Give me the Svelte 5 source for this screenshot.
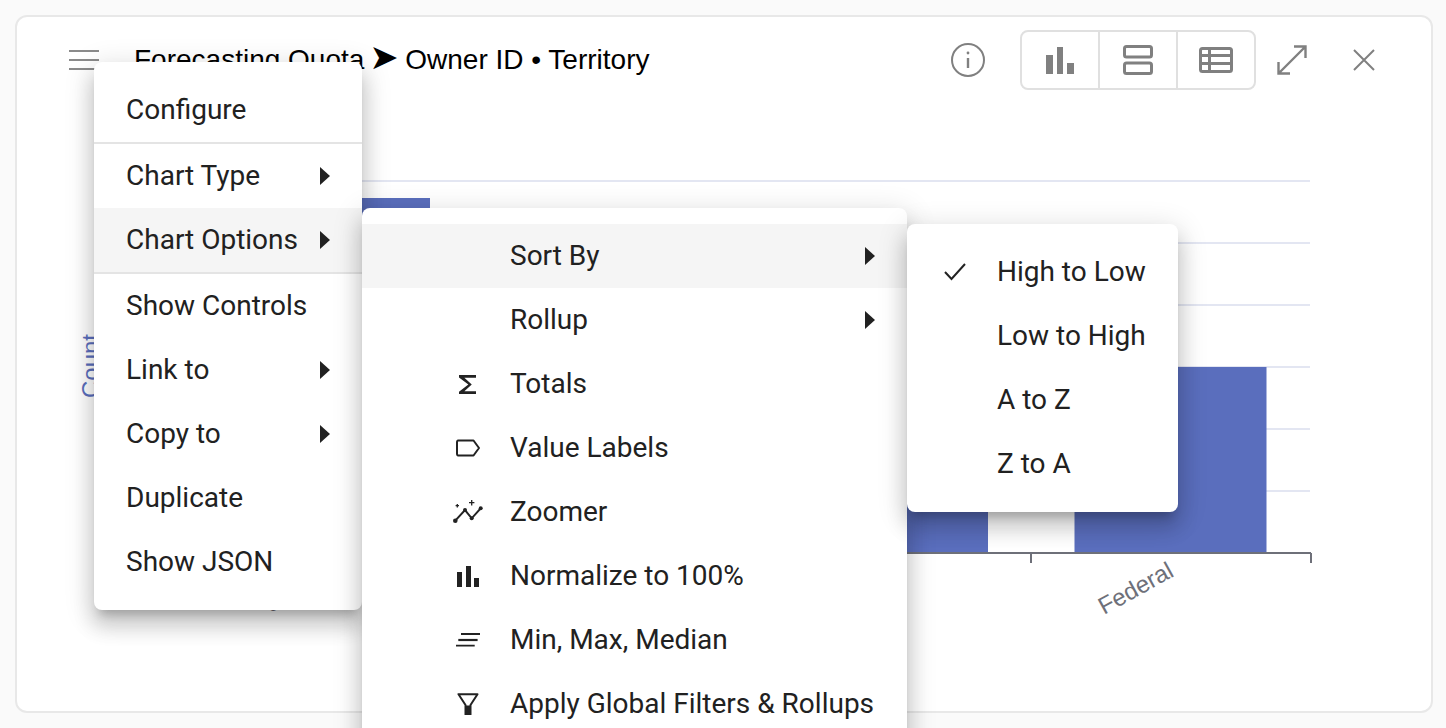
<script lang="ts">
	const mainItems = [
		{ label: 'Chart Type', arrow: true },
		{ label: 'Chart Options', arrow: true, open: true }
	];
	const lowerItems = [
		{ label: 'Show Controls' },
		{ label: 'Link to', arrow: true },
		{ label: 'Copy to', arrow: true },
		{ label: 'Duplicate' },
		{ label: 'Show JSON' }
	];
	const sortItems = ['High to Low', 'Low to High', 'A to Z', 'Z to A'];
	const gridY = [181, 243, 305, 367, 429, 491];
</script>

<div class="page">
	<div class="card">
		<header class="head">
			<button class="icon-btn" aria-label="Menu">
				<svg width="30" height="20" viewBox="0 0 30 20" fill="#8a8a8a"><rect y="0" width="30" height="2"/><rect y="9" width="30" height="2"/><rect y="18" width="30" height="2"/></svg>
			</button>
			<h1 class="title">Forecasting Quota <span class="sep">➤</span> Owner ID • Territory</h1>
			<svg class="info" width="34" height="34" viewBox="0 0 34 34" fill="none" stroke="#808080" stroke-width="2"><circle cx="17" cy="17" r="16"/><path d="M17 15v10" stroke-width="2.4"/><circle cx="17" cy="10" r="1.4" fill="#808080" stroke="none"/></svg>
			<div class="views">
				<button class="view" aria-label="Chart">
					<svg width="28" height="27" viewBox="0 0 28 27" fill="#808080"><rect x="0" y="8" width="7" height="19"/><rect x="11" y="0" width="6" height="27"/><rect x="21" y="16" width="7" height="11"/></svg>
				</button>
				<button class="view" aria-label="Rows">
					<svg width="30" height="30" viewBox="0 0 30 30" fill="none" stroke="#808080" stroke-width="3"><rect x="1.5" y="1.5" width="27" height="10.500" rx="2"/><rect x="1.5" y="18" width="27" height="10.500" rx="2"/></svg>
				</button>
				<button class="view" aria-label="Table">
					<svg width="34" height="26" viewBox="0 0 34 26" fill="none" stroke="#808080" stroke-width="3"><rect x="1.5" y="1.5" width="31" height="23" rx="2"/><path d="M1.500 8.500h31M1.500 16.500h31M10.500 1.500v23"/></svg>
				</button>
			</div>
			<svg class="expand" width="30" height="30" viewBox="0 0 30 30" fill="none" stroke="#808080" stroke-width="2.400"><path d="M2 28 28 2M17 1.500h11.500V13M13 28.500H1.500V17"/></svg>
			<svg width="22" height="22" viewBox="0 0 22 22" fill="none" stroke="#808080" stroke-width="2"><path d="M1 1 21 21M21 1 1 21"/></svg>
		</header>

		<svg class="chart" width="1414" height="608" viewBox="17 103 1414 608">
			{#each gridY as y}
				<line x1="200" x2="1310" y1={y} y2={y} stroke="#e3e6f2" stroke-width="2"/>
			{/each}
			<rect x="238" y="198" width="192" height="354" fill="#5a6ebd"/>
			<rect x="796" y="260" width="192" height="292" fill="#5a6ebd"/>
			<rect x="1074.500" y="367" width="192" height="185" fill="#5a6ebd"/>
			<path d="M190 553H1311M1031 553v10M1311 553v10" stroke="#6e7079" stroke-width="2" fill="none"/>
			<text class="ax-y" transform="translate(99 398) rotate(-90)">Count</text>
			<text class="ax-x" transform="translate(1104 615) rotate(-29)">Federal</text>
			<text class="ax-x" transform="translate(268 609) rotate(-30)">g</text>
		</svg>

		<nav class="menu main">
			<div class="item"><span>Configure</span></div>
			<hr />
			{#each mainItems as it}
				<div class="item" class:on={it.open}>
					<span>{it.label}</span>
					{#if it.arrow}<i class="arrow"></i>{/if}
					{#if it.open}
						<div class="menu options">
							<div class="item on with-icon">
								<b class="ico"></b><span>Sort By</span><i class="arrow"></i>
								<div class="menu sort">
									{#each sortItems as s, i}
										<div class="item with-icon">
											<b class="ico">
												{#if i === 0}
													<svg class="nudge" width="24" height="20" viewBox="0 0 24 20" fill="none" stroke="#222" stroke-width="2"><path d="M2 10 8.500 17 22 2"/></svg>
												{/if}
											</b>
											<span>{s}</span>
										</div>
									{/each}
								</div>
							</div>
							<div class="item with-icon"><b class="ico"></b><span>Rollup</span><i class="arrow"></i></div>
							<div class="item with-icon">
								<b class="ico"><svg width="17" height="19" viewBox="6 4 12 16" preserveAspectRatio="none" fill="#222"><path d="M18 4H6v2l6.600 6L6 18v2h12v-2.400H9.800l5.200-5.600-5.200-5.600H18z"/></svg></b>
								<span>Totals</span>
							</div>
							<div class="item with-icon">
								<b class="ico"><svg class="nudge" width="26" height="20" viewBox="0 0 26 20" fill="none" stroke="#222" stroke-width="2"><path d="M3 2.500h15.500L24 10l-5.500 7.500H3a1.500 1.500 0 0 1-1-1.500V4a1.500 1.500 0 0 1 1-1.500z" stroke-linejoin="round"/></svg></b>
								<span>Value Labels</span>
							</div>
							<div class="item with-icon">
								<b class="ico"><svg class="nudge wide" width="30" height="24" viewBox="0 0 30 24" fill="#222"><path d="M2.300 20.700 12 10l6.700 8.300 9-10" fill="none" stroke="#222" stroke-width="2"/><circle cx="2.300" cy="20.700" r="2.300"/><circle cx="12" cy="10" r="2"/><circle cx="18.700" cy="18.300" r="2"/><circle cx="27.700" cy="8.300" r="2"/><path d="M18.700 0v5.400M16 2.700h5.400M4.300 4v3.400M2.600 5.700H6" fill="none" stroke="#222" stroke-width="1.300"/></svg></b>
								<span>Zoomer</span>
							</div>
							<div class="item with-icon">
								<b class="ico"><svg class="nudge" width="22" height="21" viewBox="0 0 22 21" fill="#222"><rect x="0" y="6" width="5" height="15"/><rect x="9" y="0" width="5" height="21"/><rect x="17" y="12" width="5" height="9"/></svg></b>
								<span>Normalize to 100%</span>
							</div>
							<div class="item with-icon">
								<b class="ico"><svg class="nudge" width="24" height="14" viewBox="0 0 24 14" fill="none" stroke="#222" stroke-width="1.800"><path d="M5 1h19M0 12.700h18.700"/><path d="M2.300 7h19.300" stroke-width="2.200"/></svg></b>
								<span>Min, Max, Median</span>
							</div>
							<div class="item with-icon">
								<b class="ico"><svg class="nudge" width="22" height="22" viewBox="0 0 22 22"><path d="M1.500 1.200h19L13.500 12v9.500h-5V12z" fill="#fff" stroke="#222" stroke-width="2" stroke-linejoin="round"/><path d="M8.500 12.500h5v9h-5z" fill="#222"/></svg></b>
								<span>Apply Global Filters &amp; Rollups</span>
							</div>
						</div>
					{/if}
				</div>
			{/each}
			<hr />
			{#each lowerItems as it}
				<div class="item">
					<span>{it.label}</span>
					{#if it.arrow}<i class="arrow"></i>{/if}
				</div>
			{/each}
		</nav>
	</div>
</div>

<style>
	:global(body) { margin: 0; background: #fafafa; }
	.page { height: 728px; padding: 15px 13px 15px 15px; box-sizing: border-box; overflow: hidden; }
	.card { position: relative; height: 698px; box-sizing: border-box; background: #fff; border: 2px solid #e8e8e8; border-radius: 12px; }

	.head { display: flex; align-items: center; height: 86px; box-sizing: border-box; padding: 0 56px 0 52px; }
	.icon-btn { background: none; border: none; padding: 0; display: flex; }
	.title { flex: 1; margin: 0 0 0 35px; font: 400 28px "Liberation Sans", Arial, sans-serif; color: #000; }
	.sep { font-family: "DejaVu Sans", sans-serif; font-size: 35px; line-height: 0; margin-left: -3px; margin-right: -1px; }
	.info { margin-right: 35px; }
	.views { display: flex; height: 60px; box-sizing: border-box; border: 2px solid #e0e0e0; border-radius: 8px; margin-right: 21px; }
	.view { width: 76px; display: flex; align-items: center; justify-content: center; background: none; border: none; border-right: 2px solid #e0e0e0; padding: 0; box-sizing: content-box; }
	.view:last-child { border-right: none; }
	.expand { margin-right: 46px; }

	.chart { display: block; }
	.ax-y { font: 24px "Liberation Sans", Arial, sans-serif; fill: #5a6ebd; }
	.ax-x { font: 24px "Liberation Sans", Arial, sans-serif; fill: #6e7079; }

	.menu { position: absolute; background: #fff; border-radius: 8px; padding: 16px 0; font: 400 28px Roboto, sans-serif; color: #212121; box-shadow: 0 10px 10px -6px rgba(0,0,0,.2), 0 16px 20px 2px rgba(0,0,0,.14), 0 6px 28px 4px rgba(0,0,0,.12); }
	.main { left: 77px; top: 45px; width: 268px; }
	.options { left: 100%; top: 0; width: 545px; height: 560px; box-sizing: border-box; }
	.sort { left: 100%; top: 0; width: 271px; }
	.menu hr { margin: 0; border: none; height: 2px; background: #e4e4e4; }

	.item { position: relative; display: flex; align-items: center; justify-content: space-between; height: 64px; padding: 0 32px; white-space: nowrap; }
	.item > span { padding-bottom: 2px; }
	.item.on { background: #f5f5f5; }
	.with-icon { justify-content: flex-start; padding-left: 91px; }
	.with-icon .arrow { margin-left: auto; }
	.sort .with-icon { padding-left: 33px; }
	.ico { width: 28px; flex: none; display: flex; align-items: center; justify-content: center; margin-right: 29px; font-weight: 400; }
	.nudge { position: relative; left: 1px; }
	.wide { flex: none; }
	.arrow { width: 0; height: 0; border-left: 10px solid #212121; border-top: 9.500px solid transparent; border-bottom: 9.500px solid transparent; }
</style>
